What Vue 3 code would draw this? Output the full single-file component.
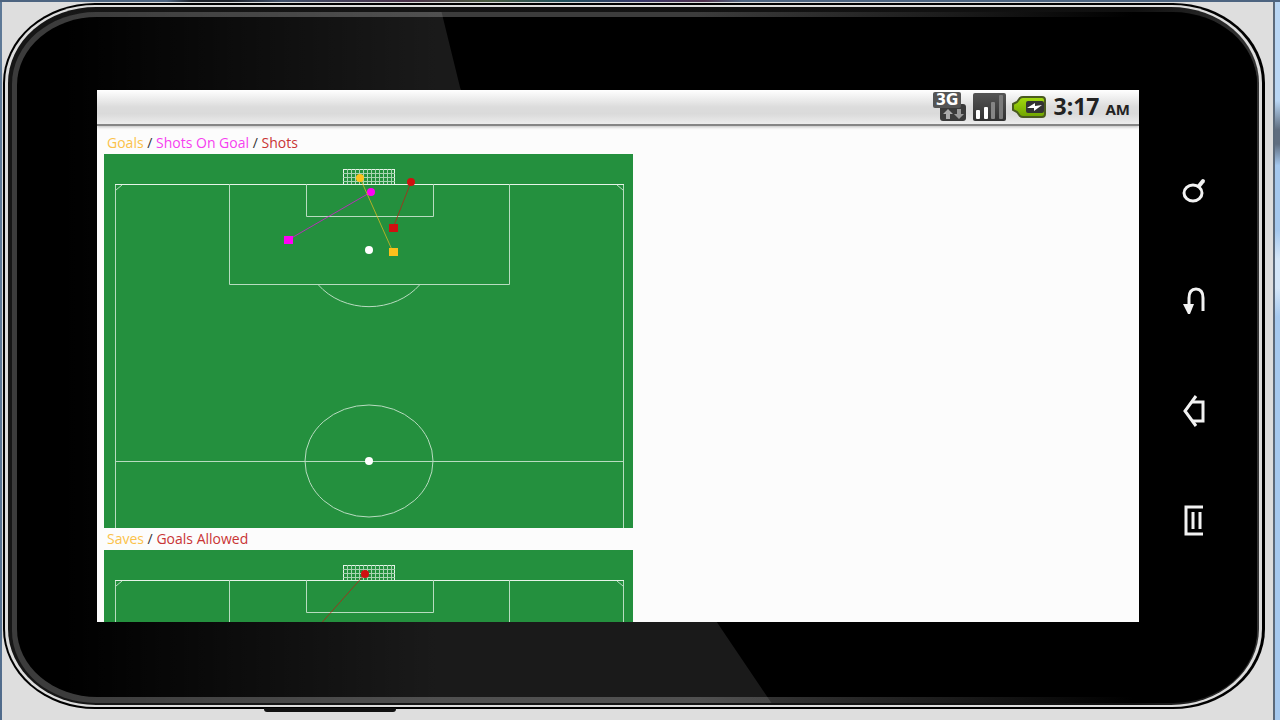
<script setup>
const keys = ['Search', 'Back', 'Home', 'Menu']

const charts = [
  {
    id: 'shots',
    legend: [
      { text: 'Goals', tone: 'gold' },
      { text: 'Shots On Goal', tone: 'pink' },
      { text: 'Shots', tone: 'red' }
    ],
    shots: [
      { tone: 'pink', from: [184, 86], to: [267, 38] },
      { tone: 'gold', from: [289, 98], to: [256, 24] },
      { tone: 'red', from: [289, 74], to: [307, 28] }
    ]
  },
  {
    id: 'saves',
    legend: [
      { text: 'Saves', tone: 'gold' },
      { text: 'Goals Allowed', tone: 'red' }
    ],
    shots: [{ tone: 'red', from: [190, 104], to: [261, 24] }]
  }
]
</script>

<template>
  <div class="window">
    <div class="device">
      <div class="rim">
        <div class="bezel">
          <div class="ring">
            <div class="face">
              <main class="screen">
                <header class="status">
                  <svg class="net" width="34" height="30" viewBox="0 0 34 30" role="img" aria-label="3G network">
                    <rect x="7" y="12" width="26" height="17" rx="3" fill="#3a3a3a" />
                    <rect x="0" y="0" width="28" height="16" rx="2" fill="#555" />
                    <text x="14" y="13" text-anchor="middle" class="net-text">3G</text>
                    <path d="M15 17l5 5h-3v5h-4v-5h-3z" fill="#aaa" />
                    <path d="M26 27l5-5h-3v-5h-4v5h-3z" fill="#999" />
                  </svg>
                  <svg width="33" height="28" viewBox="0 0 33 28" role="img" aria-label="Signal">
                    <defs>
                      <linearGradient id="sig" x1="0" y1="0" x2="0" y2="1">
                        <stop offset="0" stop-color="#555" />
                        <stop offset="1" stop-color="#303030" />
                      </linearGradient>
                    </defs>
                    <rect x="0" y="0" width="33" height="28" rx="2" fill="url(#sig)" />
                    <rect x="3" y="17" width="4" height="9" rx="1" fill="#fff" />
                    <rect x="11" y="14" width="4" height="12" rx="1" fill="#fff" />
                    <rect x="18" y="9" width="4" height="17" rx="1" fill="#858585" />
                    <rect x="26" y="2" width="4" height="24" rx="1" fill="#7a7a7a" />
                  </svg>
                  <svg class="battery" width="34" height="22" viewBox="0 0 34 22" role="img" aria-label="Battery charging">
                    <defs>
                      <linearGradient id="bat" x1="0" y1="0" x2="0" y2="1">
                        <stop offset="0" stop-color="#a4dc10" />
                        <stop offset="1" stop-color="#6fa300" />
                      </linearGradient>
                    </defs>
                    <path d="M1 8l4-2 3-4q1-1 3-1h19q3 0 3 3v14q0 3-3 3h-19q-2 0-3-1l-3-4-4-2z" fill="url(#bat)" stroke="#4a5a20" stroke-width="2" />
                    <rect x="14" y="5" width="18" height="12" rx="2" fill="#333" />
                    <path d="M15 12l8-5v3l7-1-8 6v-3z" fill="#fff" />
                  </svg>
                  <time class="clock">3:17 <small>AM</small></time>
                </header>

                <section class="content">
                  <figure v-for="chart in charts" :key="chart.id" class="chart">
                    <figcaption>
                      <template v-for="(item, i) in chart.legend" :key="item.text">
                        <template v-if="i"> / </template><span :class="item.tone">{{ item.text }}</span>
                      </template>
                    </figcaption>
                    <svg class="pitch" width="529" height="374" viewBox="0 0 529 374">
                      <rect width="529" height="374" fill="#24903e" />
                      <g class="lines">
                        <path d="M11.5 374V30.500M519.500 30V374" />
                        <path d="M11 30.500H520" class="goal-line" />
                        <path d="M125.500 30V130.500H405.500V30" />
                        <path d="M202.500 30V62.500H329.500V30" />
                        <path d="M11 307.500H520" />
                        <path d="M214 130.500A64 56 0 0 0 316 130.500" />
                        <ellipse cx="265" cy="307" rx="64" ry="56" />
                        <path d="M12 36L18 31M519 36L513 31" />
                      </g>
                      <g class="net-lines">
                        <path d="M239 15.500H291M239.500 15V30M290.500 15V30" class="goal-line" />
                        <path d="M239 19.500H291M239 23.500H291M239 27.500H291" />
                        <path d="M243.500 15V30M247.500 15V30M251.500 15V30M255.500 15V30M259.500 15V30M263.500 15V30M267.500 15V30M271.500 15V30M275.500 15V30M279.500 15V30M283.500 15V30M287.500 15V30" />
                      </g>
                      <circle cx="265" cy="96" r="4" fill="#fff" />
                      <circle cx="265" cy="307" r="4" fill="#fff" />
                      <g v-for="(shot, i) in chart.shots" :key="i" :class="shot.tone">
                        <line :x1="shot.from[0]" :y1="shot.from[1]" :x2="shot.to[0]" :y2="shot.to[1]" class="path" />
                        <rect :x="shot.from[0] - 4" :y="shot.from[1] - 4" width="9" height="8" fill="currentColor" />
                        <circle :cx="shot.to[0]" :cy="shot.to[1]" r="4" fill="currentColor" />
                      </g>
                    </svg>
                  </figure>
                </section>
              </main>

              <nav class="keys" aria-label="Device keys">
                <button v-for="key in keys" :key="key" type="button" :aria-label="key">
                  <svg width="24" height="36" viewBox="0 0 24 36" fill="none" stroke="#f2f2f2" stroke-width="2">
                    <template v-if="key === 'Search'">
                      <ellipse cx="11" cy="20" rx="9" ry="8" stroke-width="3" />
                      <path d="M17 13l4-5" stroke-width="4" stroke-linecap="round" />
                    </template>
                    <template v-else-if="key === 'Back'">
                      <path d="M7 24V15Q7 6 14 6T21 15V28" stroke-width="3" />
                      <path d="M1 21h11l-4 10h-2z" fill="#f2f2f2" stroke="none" />
                    </template>
                    <template v-else-if="key === 'Home'">
                      <path d="M14 3L3 18l11 15" stroke-width="3" />
                      <path d="M10 9H21V28H11" stroke-width="3" />
                    </template>
                    <template v-else>
                      <path d="M21 4H4V31H21" stroke-width="3" />
                      <path d="M11 9V26M18 9V26" stroke-width="3" />
                    </template>
                  </svg>
                </button>
              </nav>
            </div>
          </div>
        </div>
      </div>
    </div>
  </div>
</template>

<style>
body {
  margin: 0;
  background: #dedede;
}
</style>

<style scoped>
.window {
  box-sizing: border-box;
  height: 100vh;
  display: flex;
  padding: 3px 15px 11px 3px;
  overflow: hidden;
  background:
    linear-gradient(90deg, #4d6480 0 13%, #1c2028 15% 18%, #40506a 22%, #4a3048 32%, #4a5a40 38%, #20505c 44%, #38386a 50%, #50304c 55%, #4d6480 58%) top / 100% 2px no-repeat,
    linear-gradient(#5d7896, #5d7896 45%, #506b8b) left / 2px 100% no-repeat,
    linear-gradient(#b9d6f4 0 14%, #606e80 18% 20%, #a5c8ee 23% 32%, #d4e6f8 36% 40%, #a6c9ef 44%) right / 5px 100% no-repeat,
    linear-gradient(#5c6a7a, #5c6a7a) right / 7px 100% no-repeat,
    #dedede;
}
.device,
.rim,
.bezel,
.ring,
.face {
  flex: 1;
  display: flex;
  min-width: 0;
  min-height: 0;
  box-sizing: border-box;
}
.device {
  position: relative;
  padding: 2px 3px 2px 2px;
  border-radius: 92px / 80px;
  background: #000;
}
.device::after {
  content: '';
  position: absolute;
  left: 261px;
  bottom: -3px;
  width: 132px;
  height: 4px;
  border-radius: 0 0 3px 3px;
  background: #111;
}
.rim {
  padding: 2px 3px;
  border-radius: 90px / 78px;
  background: #dcdcdc;
}
.bezel {
  padding: 5px 2px 2px 4px;
  border-radius: 88px / 76px;
  background: linear-gradient(90deg, #161616, #101010 90%, #333);
}
.ring {
  position: relative;
  padding: 5px 0 6px 5px;
  border-radius: 84px / 72px;
  background: linear-gradient(90deg, #3c3c3c 0 55%, #1c1c1c 75%, #000 90%);
}
.face {
  padding: 73px 0 75px 80px;
  border-radius: 80px / 68px;
  background: #000;
}
/* diagonal reflection on the glass */
.ring::after {
  content: '';
  position: absolute;
  inset: 0;
  background: linear-gradient(90deg, transparent 4%, rgba(255, 255, 255, 0.1) 34%);
  clip-path: polygon(0 0, 34.5% 0, 36% 11%, 56.5% 88%, 61% 100%, 0 100%);
  pointer-events: none;
}
.screen {
  position: relative;
  z-index: 1;
  flex: 1;
  min-width: 0;
  overflow: hidden;
  background: #fcfcfc;
  font-family: 'Open Sans', 'Noto Sans', sans-serif;
}
.status {
  box-sizing: border-box;
  height: 36px;
  display: flex;
  align-items: center;
  justify-content: flex-end;
  gap: 6px;
  padding-right: 9px;
  border-bottom: 2px solid #858585;
  background: linear-gradient(#fff, #dcdcdc 50%, #dadada 70%, #ececec);
  box-shadow: 0 1px 3px #bbb;
}
.net-text {
  font: bold 15px 'DejaVu Sans', sans-serif;
  fill: #fff;
}
.clock {
  margin-left: 2px;
  font-family: 'Noto Sans', sans-serif;
  font-size: 23px;
  line-height: 28px;
  font-weight: 700;
  color: #222;
}
.clock small {
  font-size: 15px;
}
.content {
  padding: 6px 0 0 7px;
}
.chart {
  margin: 0;
}
figcaption {
  padding-left: 3px;
  font-size: 14px;
  line-height: 22px;
  color: #333;
  height: 22px;
}
figcaption .gold {
  color: #fbc24a;
}
figcaption .pink {
  color: #f640f0;
}
figcaption .red {
  color: #c93434;
}
.pitch {
  display: block;
}
.pitch .gold {
  color: #fcc01c;
}
.pitch .pink {
  color: #ff00f5;
}
.pitch .red {
  color: #d01010;
}
.lines {
  fill: none;
  stroke: #b8dcc0;
}
.net-lines {
  fill: none;
  stroke: #a8d4b2;
}
.goal-line {
  stroke: #e6f4e8;
}
.path {
  stroke: currentColor;
  stroke-opacity: 0.65;
}
.keys {
  position: relative;
  z-index: 1;
  width: 118px;
  box-sizing: border-box;
  padding-right: 8px;
  margin: -60px 0;
  display: flex;
  flex-direction: column;
  align-items: center;
  justify-content: center;
}
.keys button {
  width: 60px;
  height: 110px;
  display: flex;
  align-items: center;
  justify-content: center;
  padding: 0;
  border: 0;
  background: none;
  cursor: pointer;
}
</style>
